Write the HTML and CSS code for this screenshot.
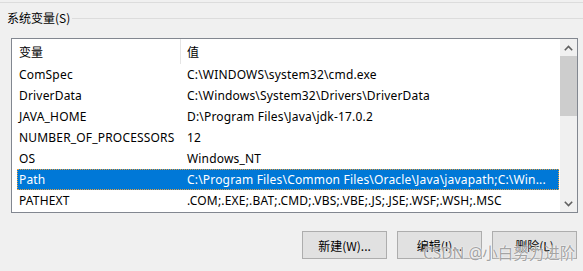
FILE: index.html
```html
<!DOCTYPE html>
<html>
<head>
<meta charset="utf-8">
<link rel="stylesheet" href="styles.css">
</head>
<body>
<div class="page">
  <div class="topline"></div>
  <div class="group-head">
    <span class="group-label">系统变量(S)</span>
    <span class="group-rule"></span>
  </div>
  <div class="listbox">
    <div class="list-main">
      <div class="header">
        <div class="hcell hcol1">变量</div>
        <div class="hsep"></div>
        <div class="hcell hcol2">值</div>
      </div>
      <div class="row"><div class="c1">ComSpec</div><div class="c2">C:\WINDOWS\system32\cmd.exe</div></div>
      <div class="row"><div class="c1">DriverData</div><div class="c2">C:\Windows\System32\Drivers\DriverData</div></div>
      <div class="row"><div class="c1">JAVA_HOME</div><div class="c2">D:\Program Files\Java\jdk-17.0.2</div></div>
      <div class="row"><div class="c1">NUMBER_OF_PROCESSORS</div><div class="c2">12</div></div>
      <div class="row"><div class="c1">OS</div><div class="c2">Windows_NT</div></div>
      <div class="row selected"><div class="c1">Path</div><div class="c2">C:\Program Files\Common Files\Oracle\Java\javapath;C:\Win...</div></div>
      <div class="row"><div class="c1">PATHEXT</div><div class="c2">.COM;.EXE;.BAT;.CMD;.VBS;.VBE;.JS;.JSE;.WSF;.WSH;.MSC</div></div>
    </div>
    <div class="scrollbar">
      <div class="arrow">
        <svg width="9" height="6" viewBox="0 0 9 6"><path d="M0.8 5.2 L4.5 1.5 L8.2 5.2" fill="none" stroke="#606060" stroke-width="1.6"/></svg>
      </div>
      <div class="track"><div class="thumb"></div></div>
      <div class="arrow">
        <svg width="9" height="6" viewBox="0 0 9 6"><path d="M0.8 0.8 L4.5 4.5 L8.2 0.8" fill="none" stroke="#606060" stroke-width="1.6"/></svg>
      </div>
    </div>
  </div>
  <div class="buttons">
    <div class="btn">新建(W)...</div>
    <div class="btn">编辑(I)...</div>
    <div class="btn">删除(L)</div>
  </div>
  <div class="watermark">CSDN @小白努力进阶</div>
</div>
</body>
</html>
```
FILE: styles.css
```css
html, body {
  margin: 0;
  padding: 0;
}
body {
  background: #f0f0f0;
  font-family: "Noto Sans", "Noto Sans CJK SC", sans-serif;
  font-size: 12px;
  color: #000;
}
.page {
  position: relative;
  width: 583px;
  height: 271px;
  overflow: hidden;
}
.topline {
  margin-top: 2px;
  height: 1px;
  background: #dcdcdc;
}
.group-head {
  display: flex;
  align-items: center;
  height: 16px;
  margin-top: 7px;
  padding-left: 7px;
}
.group-label {
  font-family: "Noto Sans CJK SC", sans-serif;
  line-height: 16px;
  padding-right: 2px;
}
.group-rule {
  flex: 1;
  height: 1px;
  background: #dcdcdc;
}
.listbox {
  margin-top: 12px;
  margin-left: 11px;
  width: 565px;
  height: 173px;
  border: 1px solid #828790;
  background: #fff;
  display: flex;
}
.list-main {
  flex: 1;
  display: flex;
  flex-direction: column;
}
.header {
  height: 25px;
  display: flex;
  align-items: stretch;
}
.hcell {
  display: flex;
  align-items: center;
  font-family: "Noto Sans CJK SC", sans-serif;
}
.hcol1 {
  width: 161px;
  padding-left: 7px;
}
.hsep {
  width: 1px;
  background: #e5e5e5;
}
.hcol2 {
  padding-left: 6px;
}
.row {
  height: 21px;
  margin-left: 5px;
  width: 542px;
  box-sizing: border-box;
  display: flex;
  align-items: center;
  white-space: nowrap;
  letter-spacing: 0.18px;
}
.c1 {
  width: 163px;
  padding-left: 2px;
  box-sizing: border-box;
}
.c2 {
  padding-left: 7px;
}
.selected {
  background: #0078d7;
  color: #fff;
  outline: 1px dotted #e8a040;
  outline-offset: -1px;
}
.scrollbar {
  width: 17px;
  background: #f0f0f0;
  display: flex;
  flex-direction: column;
}
.arrow {
  height: 17px;
  display: flex;
  align-items: center;
  justify-content: center;
}
.track {
  flex: 1;
}
.thumb {
  height: 60px;
  background: #cdcdcd;
}
.buttons {
  display: flex;
  justify-content: flex-end;
  gap: 10px;
  margin-top: 18px;
  padding-right: 6px;
}
.btn {
  width: 83px;
  height: 26px;
  border: 1px solid #adadad;
  background: #e1e1e1;
  display: flex;
  align-items: center;
  justify-content: center;
  font-family: "Noto Sans CJK SC", sans-serif;
}
.watermark {
  position: absolute;
  left: 423px;
  top: 243px;
  font-family: "Noto Sans", "Noto Sans CJK SC", sans-serif;
  font-size: 15.5px;
  line-height: 20px;
  color: rgba(140, 140, 140, 0.8);
  text-shadow: 0 0 1px #fff, 0 0 2px #fff;
  white-space: nowrap;
}
```
